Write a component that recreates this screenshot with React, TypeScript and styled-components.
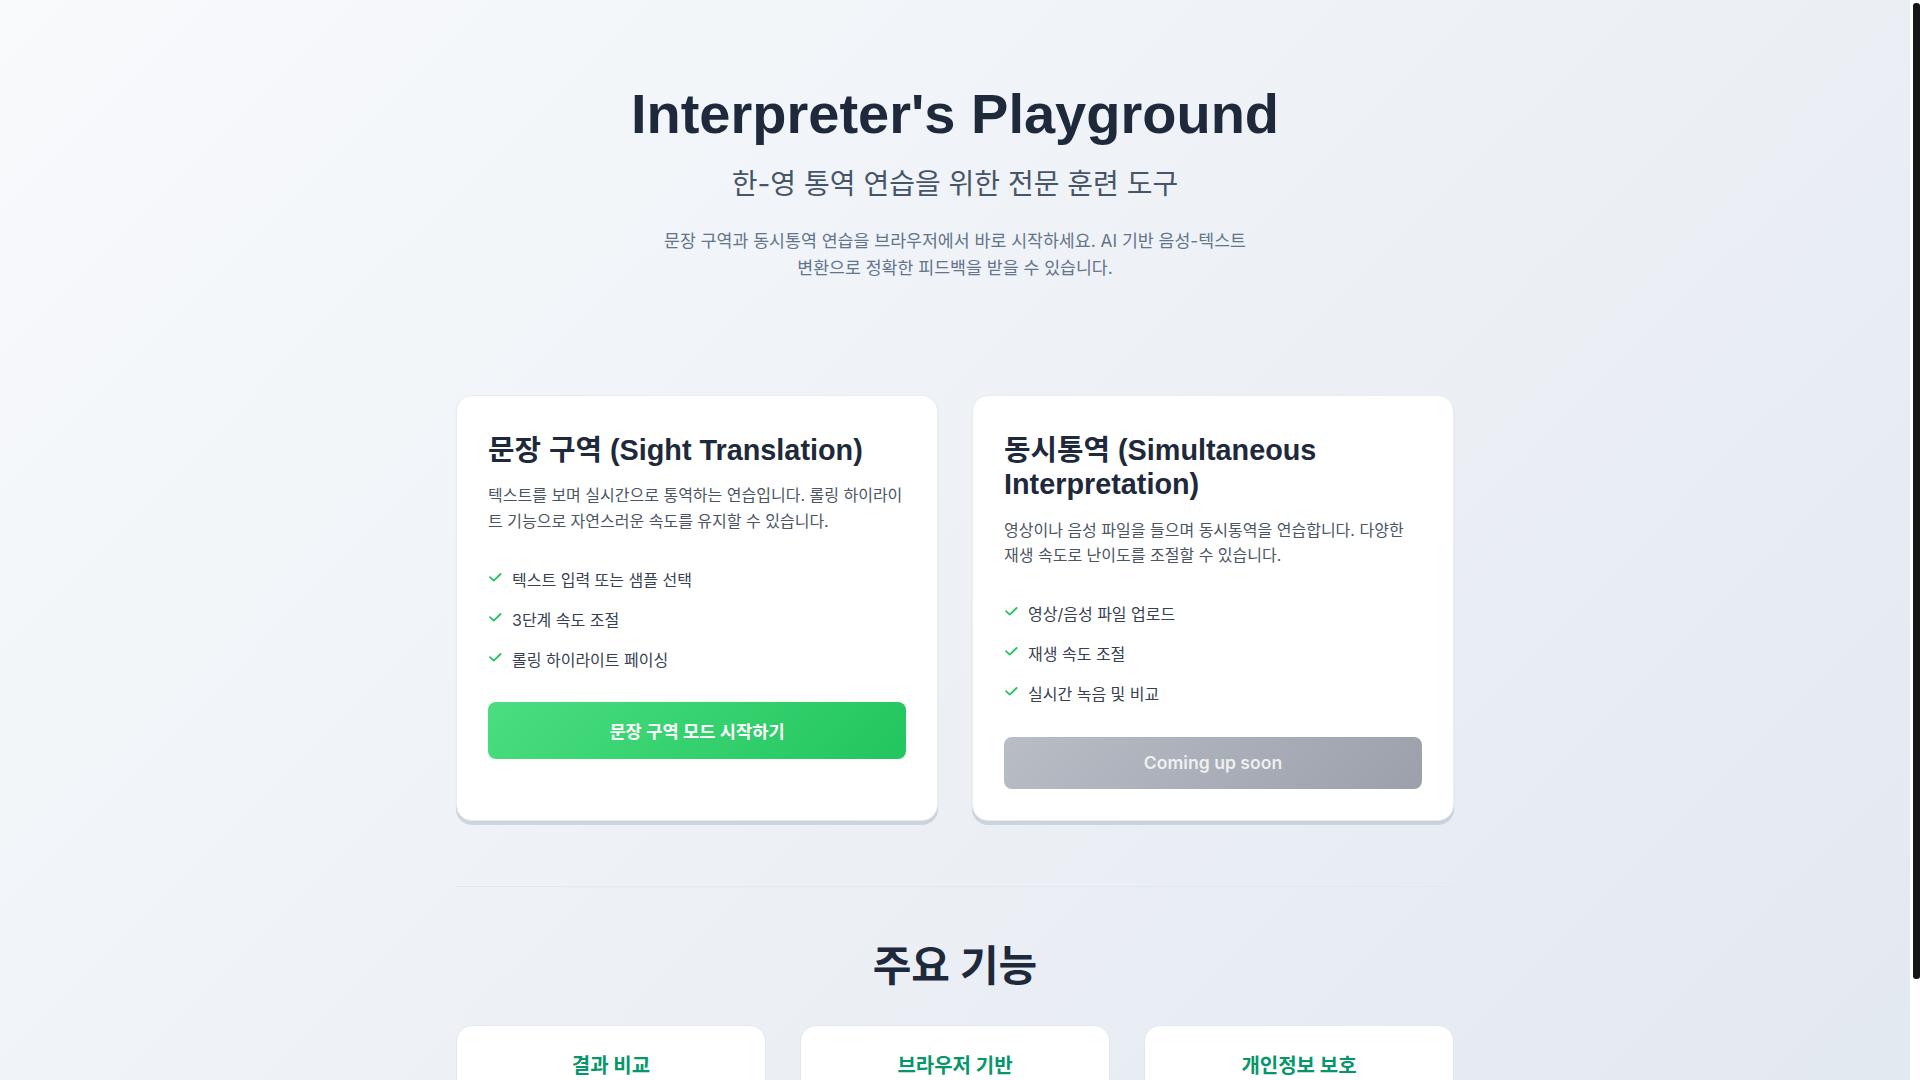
import styled, { createGlobalStyle } from "styled-components";

const GlobalStyle = createGlobalStyle`
  html, body {
    margin: 0;
    padding: 0;
    overflow: hidden;
  }
  body {
    font-family: Inter, "Noto Sans CJK KR", sans-serif;
    color: #1e293b;
  }
`;

const Frame = styled.div`
  display: flex;
  height: 100vh;
`;

const Viewport = styled.div`
  flex: 1;
  min-width: 0;
  overflow: hidden;
`;

const ScrollRail = styled.div`
  flex: none;
  width: 10px;
  background: #ffffff;
  display: flex;
  justify-content: flex-end;
  padding-top: 3px;
  box-sizing: border-box;
`;

const ScrollThumb = styled.div`
  width: 7px;
  height: 976px;
  background: #161616;
  border-radius: 3px;
`;

const Page = styled.main`
  padding: 80px 0 32px;
  background: linear-gradient(135deg, #f8fafc 0%, #e2e8f0 100%);
`;

const Container = styled.div`
  width: 998px;
  margin: 0 auto;
`;

const Hero = styled.header`
  text-align: center;
  margin-bottom: 113.5px;
`;

const Title = styled.h1`
  font-family: "Liberation Sans", Arial, "Noto Sans CJK KR", sans-serif;
  font-size: 56px;
  line-height: 1.2;
  font-weight: 700;
  color: #1e293b;
  margin: 0 0 15px;
`;

const Subtitle = styled.p`
  font-size: 28px;
  font-weight: 400;
  color: #475569;
  margin: 0 0 24.5px;
`;

const Intro = styled.p`
  font-size: 17.3px;
  line-height: 27.3px;
  color: #64748b;
  max-width: 600px;
  margin: 0 auto;
`;

const ModeGrid = styled.section`
  display: grid;
  grid-template-columns: 1fr 1fr;
  gap: 34px;
`;

const ModeCard = styled.article`
  background: #ffffff;
  border: 1px solid #e9edf2;
  border-radius: 16px;
  padding: 37px 31px 31px;
  box-shadow: 0 4px 0 rgba(148, 163, 184, 0.35), 0 1px 3px rgba(15, 23, 42, 0.04);
`;

const CardTitle = styled.h2`
  font-family: "Liberation Sans", Arial, "Noto Sans CJK KR", sans-serif;
  font-size: 28.8px;
  line-height: 1.2;
  font-weight: 700;
  color: #1e293b;
  margin: 0 0 16px;
`;

const CardText = styled.p`
  font-size: 16px;
  line-height: 25.6px;
  color: #4b5563;
  margin: 0 0 25px;
`;

const FeatureList = styled.ul`
  list-style: none;
  padding: 0;
  margin: 0 0 22.5px;
`;

const FeatureItem = styled.li`
  display: flex;
  align-items: flex-start;
  gap: 10px;
  padding: 8px 0;
  font-size: 16px;
  line-height: 24px;
  color: #374151;
`;

const Check = styled.svg`
  flex: none;
  width: 14px;
  height: 14px;
  margin-top: 3px;
`;

const ActionButton = styled.button<{ $disabled?: boolean }>`
  display: block;
  width: 100%;
  border: none;
  border-radius: 8px;
  padding: 15.8px 16px;
  font-family: Inter, "Noto Sans CJK KR", sans-serif;
  font-size: 17.6px;
  font-weight: 600;
  cursor: ${(p) => (p.$disabled ? "not-allowed" : "pointer")};
  color: ${(p) => (p.$disabled ? "rgba(255, 255, 255, 0.82)" : "#ffffff")};
  background: ${(p) =>
    p.$disabled
      ? "linear-gradient(135deg, #b9bdc6 0%, #9ba0aa 100%)"
      : "linear-gradient(135deg, #4ade80 0%, #22c55e 100%)"};
`;

const Divider = styled.hr`
  border: none;
  border-top: 1px solid #e2e8f0;
  margin: 65px 0 45px;
`;

const SectionTitle = styled.h2`
  font-size: 42px;
  font-weight: 700;
  color: #1e293b;
  text-align: center;
  margin: 0 0 32px;
`;

const FeatureGrid = styled.section`
  display: grid;
  grid-template-columns: repeat(3, 1fr);
  gap: 34px;
`;

const FeatureCard = styled.div`
  background: #ffffff;
  border: 1px solid #e2e8f0;
  border-radius: 16px;
  padding: 24px;
  text-align: center;
`;

const FeatureTitle = styled.h3`
  font-size: 20px;
  font-weight: 700;
  color: #059669;
  margin: 0 0 8px;
`;

const FeatureText = styled.p`
  font-size: 15px;
  line-height: 1.6;
  color: #64748b;
  margin: 0;
`;

const CheckIcon = () => (
  <Check viewBox="0 0 14 14" fill="none">
    <path
      d="M2 6.2 L5.8 9.6 L12.6 3"
      stroke="#22c55e"
      strokeWidth="1.8"
      strokeLinecap="round"
      strokeLinejoin="round"
    />
  </Check>
);

const modes = [
  {
    title: "문장 구역 (Sight Translation)",
    text: "텍스트를 보며 실시간으로 통역하는 연습입니다. 롤링 하이라이트 기능으로 자연스러운 속도를 유지할 수 있습니다.",
    items: ["텍스트 입력 또는 샘플 선택", "3단계 속도 조절", "롤링 하이라이트 페이싱"],
    button: "문장 구역 모드 시작하기",
    disabled: false,
  },
  {
    title: "동시통역 (Simultaneous Interpretation)",
    text: "영상이나 음성 파일을 들으며 동시통역을 연습합니다. 다양한 재생 속도로 난이도를 조절할 수 있습니다.",
    items: ["영상/음성 파일 업로드", "재생 속도 조절", "실시간 녹음 및 비교"],
    button: "Coming up soon",
    disabled: true,
  },
];

const features = [
  { title: "결과 비교", text: "원문과 통역 결과를 나란히 비교하여 정확도를 확인하세요." },
  { title: "브라우저 기반", text: "설치 없이 브라우저에서 바로 연습을 시작할 수 있습니다." },
  { title: "개인정보 보호", text: "모든 음성 데이터는 기기 안에서만 처리됩니다." },
];

export default function App() {
  return (
    <>
      <GlobalStyle />
      <Frame>
        <Viewport>
          <Page>
            <Container>
              <Hero>
                <Title>Interpreter's Playground</Title>
                <Subtitle>한-영 통역 연습을 위한 전문 훈련 도구</Subtitle>
                <Intro>
                  문장 구역과 동시통역 연습을 브라우저에서 바로 시작하세요. AI 기반
                  음성-텍스트 변환으로 정확한 피드백을 받을 수 있습니다.
                </Intro>
              </Hero>

              <ModeGrid>
                {modes.map((m) => (
                  <ModeCard key={m.title}>
                    <CardTitle>{m.title}</CardTitle>
                    <CardText>{m.text}</CardText>
                    <FeatureList>
                      {m.items.map((item) => (
                        <FeatureItem key={item}>
                          <CheckIcon />
                          <span>{item}</span>
                        </FeatureItem>
                      ))}
                    </FeatureList>
                    <ActionButton $disabled={m.disabled} disabled={m.disabled}>
                      {m.button}
                    </ActionButton>
                  </ModeCard>
                ))}
              </ModeGrid>

              <Divider />

              <SectionTitle>주요 기능</SectionTitle>
              <FeatureGrid>
                {features.map((f) => (
                  <FeatureCard key={f.title}>
                    <FeatureTitle>{f.title}</FeatureTitle>
                    <FeatureText>{f.text}</FeatureText>
                  </FeatureCard>
                ))}
              </FeatureGrid>
            </Container>
          </Page>
        </Viewport>
        <ScrollRail>
          <ScrollThumb />
        </ScrollRail>
      </Frame>
    </>
  );
}
